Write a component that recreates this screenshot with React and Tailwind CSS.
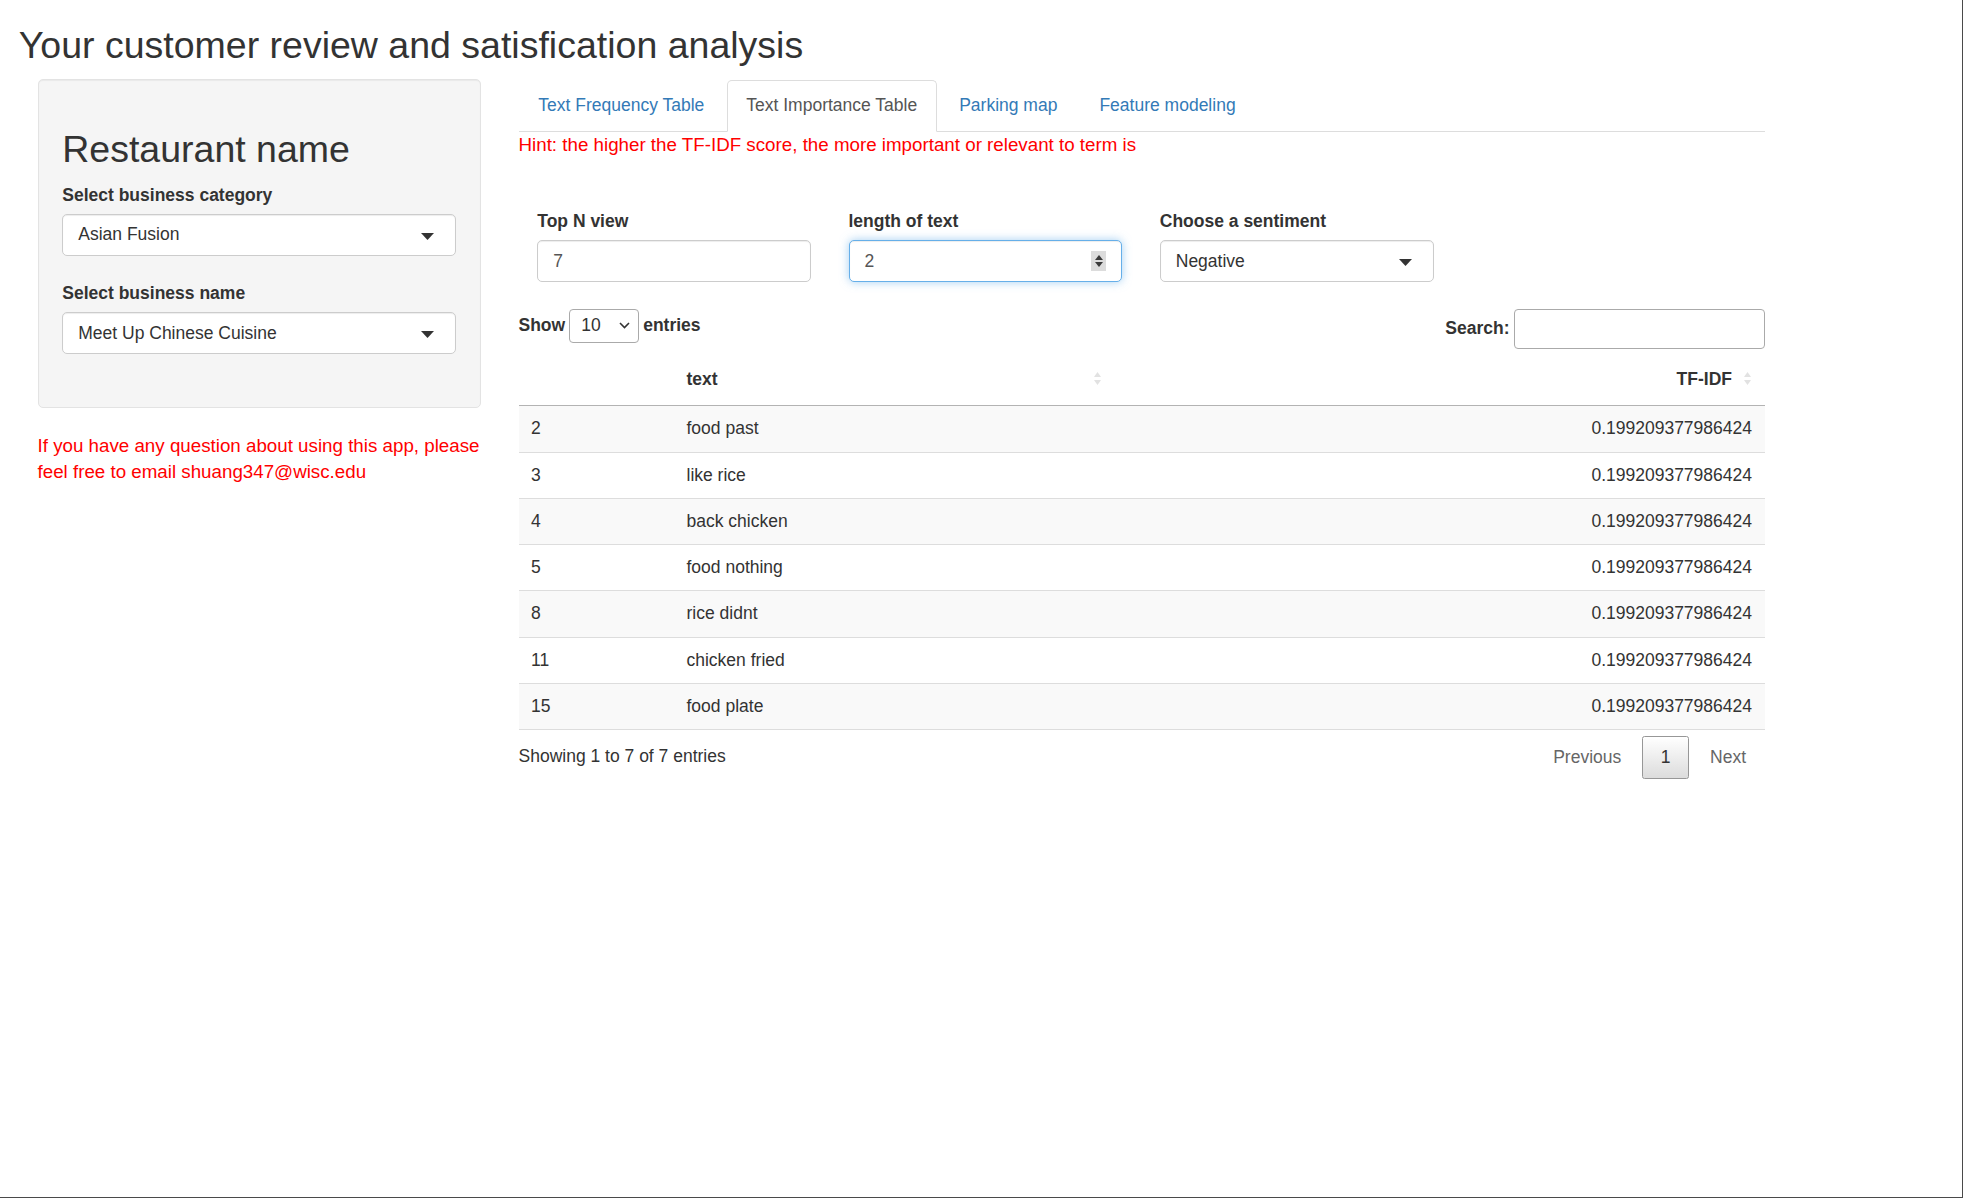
import React from "react";

const rows = [
  [2, "food past"],
  [3, "like rice"],
  [4, "back chicken"],
  [5, "food nothing"],
  [8, "rice didnt"],
  [11, "chicken fried"],
  [15, "food plate"],
];
const score = "0.199209377986424";

function SelectBox({ value }) {
  return (
    <div className="relative flex h-[42.5px] items-center rounded-[5px] border border-[#ccc] bg-white pl-[15px] text-[#333] shadow-[inset_0_1px_1px_rgba(0,0,0,0.075)]">
      <span>{value}</span>
      <svg className="absolute right-[21px] top-[18px]" width="13" height="7" viewBox="0 0 13 7">
        <path d="M0 0h13L6.5 7z" fill="#333" />
      </svg>
    </div>
  );
}

function SortArrows() {
  return (
    <span className="absolute right-[14px] top-[18px] flex flex-col items-center gap-[3px]">
      <svg width="7" height="5" viewBox="0 0 7 5">
        <path d="M0 5L3.5 0 7 5z" fill="#e2e2e2" />
      </svg>
      <svg width="7" height="5" viewBox="0 0 7 5">
        <path d="M0 0h7L3.5 5z" fill="#e2e2e2" />
      </svg>
    </span>
  );
}

function Tab({ label, active }) {
  return (
    <a
      className={
        active
          ? "-mb-px mr-[2.5px] rounded-t-[5px] border border-[#ddd] border-b-white bg-white px-[18.75px] py-[12.5px] leading-[25px] text-[#555]"
          : "-mb-px mr-[2.5px] rounded-t-[5px] border border-transparent px-[18.75px] py-[12.5px] leading-[25px] text-[#337ab7]"
      }
    >
      {label}
    </a>
  );
}

export default function App() {
  return (
    <div
      className="relative h-[1198px] w-[1963px] overflow-hidden border-r border-b border-[#4a4a4a] bg-white pl-[18.75px] text-[17.5px] leading-[25px] text-[#333]"
      style={{ fontFamily: '"Liberation Sans", Arial, sans-serif' }}
    >
      <h2 className="mt-[25px] mb-[12.5px] text-[37.5px] leading-[41.25px] font-normal">
        Your customer review and satisfication analysis
      </h2>

      <div className="flex items-start">
        {/* sidebar */}
        <div className="ml-[18.75px] w-[443px]">
          <div className="rounded-[5px] border border-[#e3e3e3] bg-[#f5f5f5] px-[23.75px] pt-[23.75px] pb-[52.5px] shadow-[inset_0_1px_1px_rgba(0,0,0,0.05)]">
            <h2 className="mt-[25px] mb-[13.5px] text-[37.5px] leading-[41.25px] font-normal">Restaurant name</h2>
            <label className="mb-[5.25px] block font-bold">Select business category</label>
            <SelectBox value="Asian Fusion" />
            <label className="mt-[25px] mb-[5.75px] block font-bold">Select business name</label>
            <SelectBox value="Meet Up Chinese Cuisine" />
          </div>
          <p className="mt-[25px] text-[18.75px] leading-[26.5px] text-[#ff0000]">
            If you have any question about using this app, please feel free to email shuang347@wisc.edu
          </p>
        </div>

        {/* main */}
        <div className="mt-[1px] ml-[38px] w-[1246px]">
          <div className="flex border-b border-[#ddd]">
            <Tab label="Text Frequency Table" />
            <Tab label="Text Importance Table" active />
            <Tab label="Parking map" />
            <Tab label="Feature modeling" />
          </div>
          <div className="text-[18.75px] leading-[26.8px] text-[#ff0000]">
            Hint: the higher the TF-IDF score, the more important or relevant to term is
          </div>

          <div className="mt-[50.2px] grid grid-cols-[repeat(4,311.25px)]">
            <div className="px-[18.75px]">
              <label className="mb-[6.25px] block font-bold">Top N view</label>
              <div className="flex h-[42.5px] items-center rounded-[5px] border border-[#ccc] bg-white px-[15px] text-[#555] shadow-[inset_0_1px_1px_rgba(0,0,0,0.075)]">
                7
              </div>
            </div>
            <div className="px-[18.75px]">
              <label className="mb-[6.25px] block font-bold">length of text</label>
              <div className="relative flex h-[42.5px] items-center rounded-[5px] border border-[#66afe9] bg-white px-[15px] text-[#555] shadow-[inset_0_1px_1px_rgba(0,0,0,0.075),0_0_10px_rgba(102,175,233,0.6)]">
                2
                <div className="absolute right-[15px] top-[10px] flex h-[20px] w-[15px] flex-col items-center justify-center gap-[2px] bg-[#dcdcdc]">
                  <svg width="8" height="5" viewBox="0 0 8 5">
                    <path d="M0 5L4 0 8 5z" fill="#3a3a3a" />
                  </svg>
                  <svg width="8" height="5" viewBox="0 0 8 5">
                    <path d="M0 0h8L4 5z" fill="#3a3a3a" />
                  </svg>
                </div>
              </div>
            </div>
            <div className="px-[18.75px]">
              <label className="mb-[6.25px] block font-bold">Choose a sentiment</label>
              <SelectBox value="Negative" />
            </div>
          </div>

          {/* datatable controls */}
          <div className="mt-[26.5px] flex items-start justify-between">
            <div className="flex h-[34px] items-center font-bold">
              <span>Show</span>
              <div className="mx-[4px] flex h-[34px] w-[70px] items-center justify-between rounded-[4px] border border-[#aaa] pl-[11px] pr-[8px] font-normal">
                <span>10</span>
                <svg width="11" height="7" viewBox="0 0 11 7">
                  <path d="M1 1l4.5 4.5L10 1" fill="none" stroke="#333" strokeWidth="1.6" />
                </svg>
              </div>
              <span>entries</span>
            </div>
            <div className="flex h-[40px] items-center font-bold">
              <span>Search:</span>
              <div className="ml-[4px] h-[40px] w-[251px] rounded-[4px] border border-[#aaa] bg-white" />
            </div>
          </div>

          {/* table */}
          <table className="mt-[5.25px] w-full table-fixed border-separate border-spacing-0">
            <colgroup>
              <col className="w-[155.5px]" />
              <col className="w-[440.5px]" />
              <col />
            </colgroup>
            <thead>
              <tr>
                <th className="border-b border-[#b3b3b3] px-[12.5px] py-[13px] text-left font-bold"></th>
                <th className="relative border-b border-[#b3b3b3] py-[13px] pl-[12.5px] pr-[32.5px] text-left font-bold">
                  text
                  <SortArrows />
                </th>
                <th className="relative border-b border-[#b3b3b3] py-[13px] pl-[12.5px] pr-[32.5px] text-right font-bold">
                  TF-IDF
                  <SortArrows />
                </th>
              </tr>
            </thead>
            <tbody>
              {rows.map(([n, t], i) => {
                const bg = i % 2 === 0 ? "bg-[#f9f9f9]" : "bg-white";
                const top = i === 0 ? "" : "border-t border-[#ddd]";
                const bottom = i === rows.length - 1 ? "border-b border-[#b3b3b3]" : "";
                const cell = `${bg} ${top} ${bottom} px-[12.5px] py-[10px] leading-[25.3px]`;
                return (
                  <tr key={n}>
                    <td className={cell}>{n}</td>
                    <td className={cell}>{t}</td>
                    <td className={`${cell} text-right`}>{score}</td>
                  </tr>
                );
              })}
            </tbody>
          </table>

          <div className="flex items-start justify-between">
            <div className="pt-[13.2px]">Showing 1 to 7 of 7 entries</div>
            <div className="flex pt-[5.6px]">
              <span className="ml-[2.5px] rounded-[2.5px] border border-transparent px-[17.5px] py-[8.25px] text-[#666]">Previous</span>
              <span className="ml-[2.5px] rounded-[2.5px] border border-[#979797] bg-linear-to-b from-white to-[#dcdcdc] px-[17.5px] py-[8.25px] text-[#333]">1</span>
              <span className="ml-[2.5px] rounded-[2.5px] border border-transparent px-[17.5px] py-[8.25px] text-[#666]">Next</span>
            </div>
          </div>
        </div>
      </div>
    </div>
  );
}
